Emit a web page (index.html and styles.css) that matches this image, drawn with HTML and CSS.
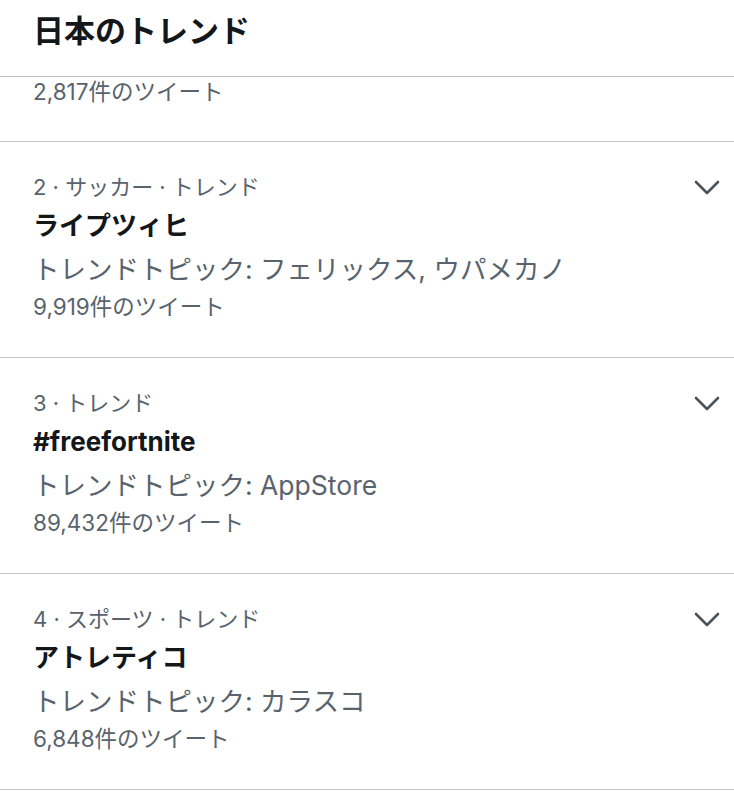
FILE: index.html
```html
<!DOCTYPE html>
<html lang="ja">
<head>
<meta charset="utf-8">
<link rel="stylesheet" href="styles.css">
</head>
<body>
<div class="page">
  <header class="header"><h1 class="header-title">日本のトレンド</h1></header>
  <div class="item item-partial">
    <div class="content">
      <div class="count">2,817件のツイート</div>
    </div>
  </div>
  <div class="item">
    <div class="content">
      <div class="meta">2 · サッカー · トレンド</div>
      <div class="title">ライプツィヒ</div>
      <div class="topic">トレンドトピック: フェリックス, ウパメカノ</div>
      <div class="count">9,919件のツイート</div>
    </div>
    <svg class="chevron" viewBox="0 0 28 28" width="28" height="28"><path d="M3 8 L14 19 L25 8" fill="none" stroke="#4a525a" stroke-width="2.6" stroke-linecap="round" stroke-linejoin="round"/></svg>
  </div>
  <div class="item">
    <div class="content">
      <div class="meta">3 · トレンド</div>
      <div class="title">#freefortnite</div>
      <div class="topic">トレンドトピック: AppStore</div>
      <div class="count">89,432件のツイート</div>
    </div>
    <svg class="chevron" viewBox="0 0 28 28" width="28" height="28"><path d="M3 8 L14 19 L25 8" fill="none" stroke="#4a525a" stroke-width="2.6" stroke-linecap="round" stroke-linejoin="round"/></svg>
  </div>
  <div class="item">
    <div class="content">
      <div class="meta">4 · スポーツ · トレンド</div>
      <div class="title">アトレティコ</div>
      <div class="topic">トレンドトピック: カラスコ</div>
      <div class="count">6,848件のツイート</div>
    </div>
    <svg class="chevron" viewBox="0 0 28 28" width="28" height="28"><path d="M3 8 L14 19 L25 8" fill="none" stroke="#4a525a" stroke-width="2.6" stroke-linecap="round" stroke-linejoin="round"/></svg>
  </div>
</div>
</body>
</html>
```

FILE: styles.css
```css
html, body {
  margin: 0;
  padding: 0;
  background: #ffffff;
}
body {
  font-family: Inter, "Noto Sans CJK JP", sans-serif;
  color: #14171a;
}
.page {
  width: 734px;
}
.header {
  display: flex;
  align-items: center;
  padding: 0 33px;
  border-bottom: 1px solid #c2c4c6;
  box-sizing: border-box;
  height: 77px;
}
.header-title {
  margin: 0;
  margin-top: -14px;
  font-size: 31px;
  font-weight: 700;
  line-height: 40px;
  color: #14171a;
}
.item {
  display: flex;
  align-items: flex-start;
  padding: 30px 13px 31px 33px;
  border-bottom: 1px solid #c2c4c6;
}
.item-partial {
  padding-top: 0;
  padding-bottom: 34px;
}
.item-partial .count {
  line-height: 30px;
}
.content {
  flex: 1;
  min-width: 0;
}
.meta {
  font-size: 22px;
  line-height: 30px;
  color: #58636d;
}
.title {
  font-size: 26px;
  font-weight: 700;
  line-height: 48px;
  color: #14171a;
}
.topic {
  font-size: 26.5px;
  line-height: 38px;
  color: #58636d;
}
.count {
  font-size: 22.5px;
  line-height: 38px;
  color: #58636d;
}
.chevron {
  flex: none;
  margin-top: 2px;
}
```
